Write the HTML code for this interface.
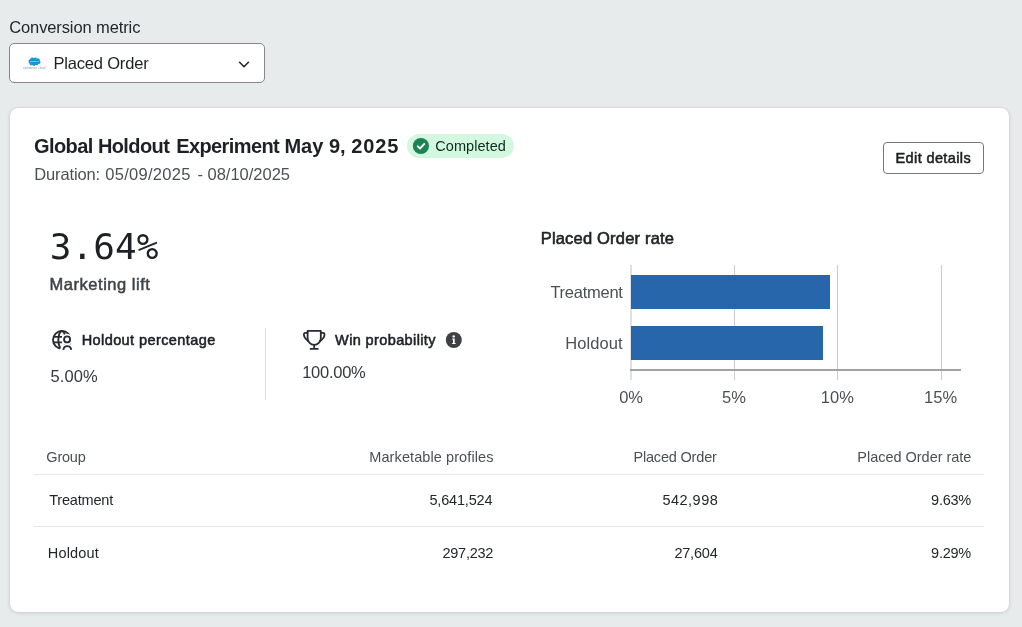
<!DOCTYPE html>
<html lang="en">
<head>
<meta charset="utf-8">
<title>Global Holdout Experiment</title>
<style>
html,body{margin:0;padding:0;}
body{width:1022px;height:627px;overflow:hidden;background:#e8ebec;position:relative;font-family:"Liberation Sans",sans-serif;}
.t{position:absolute;line-height:1;white-space:nowrap;}
.sans{font-family:"Liberation Sans",sans-serif;}
.mono{font-family:"DejaVu Sans Mono","Liberation Mono",monospace;}
.abs{position:absolute;}
.select{left:9px;top:43px;width:254px;height:38px;border:1px solid #84878b;border-radius:5px;background:#fff;}
.card{left:9.5px;top:108px;width:999px;height:503.5px;background:#fff;border-radius:8px;box-shadow:0 0 2px rgba(50,60,70,.22),0 1px 4px rgba(50,60,70,.11);}
.badge{left:407px;top:134px;width:107px;height:24px;border-radius:12px;background:#d4f7e0;}
.btn{left:883px;top:142px;width:99px;height:29.5px;border:1px solid #74787c;border-radius:4px;background:#fff;}
.vdiv{left:265px;top:328px;width:1px;height:72px;background:#dcdfe2;}
.hline{left:34px;width:950px;height:1px;background:#e3e6e8;}
.grid{top:265px;width:1px;height:115px;background:#c9cdd2;}
.bar{left:631px;height:34px;background:#2866ab;}
.axis{left:630px;top:369px;width:331px;height:2px;background:#9ea3a8;}
svg{position:absolute;overflow:visible;}
</style>
</head>
<body>
<div id="app" style="position:absolute;left:0;top:0;width:1022px;height:627px;will-change:transform;">
<div class="abs select"></div>
<div class="abs card"></div>
<div class="abs badge"></div>
<div class="abs btn"></div>
<div class="abs vdiv"></div>
<div class="abs hline" style="top:474px"></div>
<div class="abs hline" style="top:526px"></div>
<div class="abs grid" style="left:630px;width:2px;background:#dde1e5;height:115px"></div>
<div class="abs grid" style="left:734px"></div>
<div class="abs grid" style="left:837px"></div>
<div class="abs grid" style="left:941px"></div>
<div class="abs bar" style="top:275px;width:199px"></div>
<div class="abs bar" style="top:326px;width:192px"></div>
<div class="abs axis"></div>

<!-- logo -->
<svg style="left:22px;top:54px" width="24" height="18" viewBox="0 0 24 18">
 <path d="M7.4 9a2 2 0 0 1 .8-3.7 2.3 2.3 0 0 1 3.8-1.2 2.2 2.2 0 0 1 3 .3 2.3 2.3 0 0 1 2.9 2.4 1.9 1.9 0 0 1-1.4 3.3 2 2 0 0 1-2.9.8 2.1 2.1 0 0 1-3.2.2A2.1 2.1 0 0 1 7.4 9z" fill="#1797d6"/>
 <text x="12.2" y="7.9" text-anchor="middle" font-family="Liberation Sans, sans-serif" font-size="1.9" font-style="italic" fill="#cfeafa">salesforce</text>
 <text x="12.2" y="14.7" text-anchor="middle" font-family="Liberation Sans, sans-serif" font-size="3" fill="#8f9aa4" letter-spacing="0.04">commerce cloud</text>
</svg>
<!-- chevron -->
<svg style="left:238px;top:59.8px" width="12" height="10" viewBox="0 0 12 10"><path d="M1.6 2.3L6 6.7l4.4-4.4" fill="none" stroke="#24272a" stroke-width="1.6" stroke-linecap="round" stroke-linejoin="round"/></svg>
<!-- check -->
<svg style="left:413px;top:138px" width="16" height="16" viewBox="0 0 16 16"><circle cx="7.9" cy="8" r="8.1" fill="#1a8454"/><path d="M4.8 8.3l2.2 2.2 4.3-4.6" fill="none" stroke="#fff" stroke-width="1.9" stroke-linecap="round" stroke-linejoin="round"/></svg>
<!-- globe user -->
<svg style="left:50px;top:328px" width="24" height="24" viewBox="0 0 24 24">
 <defs><mask id="gm" maskUnits="userSpaceOnUse" x="0" y="0" width="24" height="24"><rect width="24" height="24" fill="#fff"/><circle cx="17.1" cy="11.4" r="5.6" fill="#000"/><ellipse cx="17.3" cy="23.2" rx="7.6" ry="7.4" fill="#000"/></mask></defs>
 <g fill="none" stroke="#262c32" stroke-width="1.9">
  <g mask="url(#gm)">
   <circle cx="11.95" cy="11.9" r="8.9"/>
   <ellipse cx="11.95" cy="11.9" rx="3.6" ry="8.9"/>
   <path d="M3.6 8.9h8.4M3.6 14.4h8.4"/>
  </g>
  <circle cx="17.1" cy="11.4" r="3"/>
  <path d="M13.3 21.9a4 4.3 0 0 1 7.95 0"/>
 </g>
</svg>
<!-- trophy -->
<svg style="left:302px;top:329px" width="24" height="23" viewBox="0 0 24 23">
 <g fill="none" stroke="#262c32" stroke-width="1.8" stroke-linecap="round" stroke-linejoin="round">
  <path d="M5.6 1.8h13.2v7.4a6.6 6.6 0 0 1-13.2 0z"/>
  <path d="M5.6 3.9H3.3C2 3.9 1.9 5 1.9 5.6c0 2.6 1.6 4.6 4.4 6.6"/>
  <path d="M18.8 3.9h2.3c1.3 0 1.4 1.1 1.4 1.7 0 2.6-1.6 4.6-4.4 6.6"/>
  <path d="M12.2 16v3.6M8.6 19.9h7.2"/>
 </g>
</svg>
<!-- info -->
<svg style="left:445px;top:331px" width="18" height="18" viewBox="0 0 18 18"><circle cx="8.8" cy="9" r="8" fill="#3e4144"/><circle cx="8.7" cy="5.4" r="1.2" fill="#fff"/><path d="M7.3 7.6h2.4v4.3h.9v1.2H7.1v-1.2h.9V8.8h-.7z" fill="#fff"/></svg>

<span class="t sans lbl" style="left:9.2px;top:19.0px;font-size:16.5px;color:#24272a;letter-spacing:-0.11px;">Conversion metric</span>
<span class="t sans sel-val" style="left:53.5px;top:55.2px;font-size:16.5px;color:#1d2024;letter-spacing:-0.19px;">Placed Order</span>
<span class="t sans title" style="left:33.9px;top:136.0px;font-size:20px;color:#1d2024;font-weight:bold;letter-spacing:-0.54px;">Global</span>
<span class="t sans title" style="left:97.9px;top:136.0px;font-size:20px;color:#1d2024;font-weight:bold;letter-spacing:-0.6px;">Holdout</span>
<span class="t sans title" style="left:176.2px;top:136.0px;font-size:20px;color:#1d2024;font-weight:bold;letter-spacing:-0.6px;">Experiment</span>
<span class="t sans title" style="left:284.4px;top:136.0px;font-size:20px;color:#1d2024;font-weight:bold;">May</span>
<span class="t sans title" style="left:329.0px;top:136.0px;font-size:20px;color:#1d2024;font-weight:bold;">9,</span>
<span class="t sans title" style="left:351.3px;top:136.0px;font-size:20px;color:#1d2024;font-weight:bold;letter-spacing:0.9px;">2025</span>
<span class="t sans badge-t" style="left:435.3px;top:138.7px;font-size:14.5px;color:#0a2c1f;letter-spacing:0.06px;">Completed</span>
<span class="t sans sub" style="left:34.3px;top:165.5px;font-size:16.5px;color:#4b5055;letter-spacing:-0.14px;">Duration:</span>
<span class="t sans sub" style="left:105.3px;top:165.5px;font-size:16.5px;color:#4b5055;letter-spacing:0.28px;">05/09/2025</span>
<span class="t sans sub" style="left:197.5px;top:165.5px;font-size:16.5px;color:#4b5055;">-</span>
<span class="t sans sub" style="left:207.5px;top:165.5px;font-size:16.5px;color:#4b5055;letter-spacing:-0.01px;">08/10/2025</span>
<span class="t sans btn-t" style="left:895.5px;top:150.5px;font-size:14.5px;color:#1d2024;letter-spacing:0.39px;-webkit-text-stroke:0.55px #1d2024;">Edit details</span>
<span class="t mono big" style="left:49.7px;top:229.1px;font-size:36px;color:#1d2024;letter-spacing:0.12px;">3.64%</span>
<span class="t sans h" style="left:49.6px;top:275.7px;font-size:16.5px;color:#3f4449;letter-spacing:0.52px;-webkit-text-stroke:0.5px #3f4449;">Marketing lift</span>
<span class="t sans h" style="left:81.7px;top:332.7px;font-size:14.5px;color:#1d2024;letter-spacing:0.41px;-webkit-text-stroke:0.55px #1d2024;">Holdout percentage</span>
<span class="t sans v" style="left:50.6px;top:368.0px;font-size:16.5px;color:#35383c;letter-spacing:0.08px;">5.00%</span>
<span class="t sans h" style="left:335.1px;top:332.5px;font-size:14.5px;color:#1d2024;letter-spacing:0.38px;-webkit-text-stroke:0.55px #1d2024;">Win probability</span>
<span class="t sans v" style="left:302.2px;top:364.1px;font-size:16.5px;color:#35383c;letter-spacing:-0.27px;">100.00%</span>
<span class="t sans h" style="left:540.7px;top:229.8px;font-size:16.5px;color:#1d2024;letter-spacing:0.19px;-webkit-text-stroke:0.6px #1d2024;">Placed Order rate</span>
<span class="t sans ax" style="left:550.4px;top:283.8px;font-size:16.5px;color:#4b5055;letter-spacing:-0.26px;">Treatment</span>
<span class="t sans ax" style="left:565.3px;top:334.7px;font-size:16.5px;color:#4b5055;letter-spacing:0.07px;">Holdout</span>
<span class="t sans ax" style="left:619.2px;top:389.2px;font-size:16.5px;color:#4b5055;">0%</span>
<span class="t sans ax" style="left:722.0px;top:389.2px;font-size:16.5px;color:#4b5055;">5%</span>
<span class="t sans ax" style="left:820.8px;top:389.2px;font-size:16.5px;color:#4b5055;">10%</span>
<span class="t sans ax" style="left:924.1px;top:389.2px;font-size:16.5px;color:#4b5055;">15%</span>
<span class="t sans th" style="left:46.3px;top:449.7px;font-size:14.5px;color:#4b5055;letter-spacing:-0.2px;">Group</span>
<span class="t sans th" style="left:369.3px;top:449.7px;font-size:14.5px;color:#4b5055;letter-spacing:0.09px;">Marketable profiles</span>
<span class="t sans th" style="left:633.4px;top:449.7px;font-size:14.5px;color:#4b5055;letter-spacing:-0.18px;">Placed Order</span>
<span class="t sans th" style="left:857.3px;top:449.7px;font-size:14.5px;color:#4b5055;letter-spacing:-0.02px;">Placed Order rate</span>
<span class="t sans td" style="left:49.2px;top:492.6px;font-size:14.5px;color:#24272a;letter-spacing:-0.19px;">Treatment</span>
<span class="t sans td" style="left:429.4px;top:492.6px;font-size:14.5px;color:#24272a;letter-spacing:-0.17px;">5,641,524</span>
<span class="t sans td" style="left:662.4px;top:492.6px;font-size:14.5px;color:#24272a;letter-spacing:0.5px;">542,998</span>
<span class="t sans td" style="left:931.1px;top:492.6px;font-size:14.5px;color:#24272a;letter-spacing:-0.28px;">9.63%</span>
<span class="t sans td" style="left:47.8px;top:545.8px;font-size:14.5px;color:#24272a;letter-spacing:0.17px;">Holdout</span>
<span class="t sans td" style="left:442.4px;top:545.8px;font-size:14.5px;color:#24272a;letter-spacing:-0.23px;">297,232</span>
<span class="t sans td" style="left:674.4px;top:545.8px;font-size:14.5px;color:#24272a;letter-spacing:-0.2px;">27,604</span>
<span class="t sans td" style="left:931.1px;top:545.8px;font-size:14.5px;color:#24272a;letter-spacing:-0.28px;">9.29%</span>
</div>
</body>
</html>
